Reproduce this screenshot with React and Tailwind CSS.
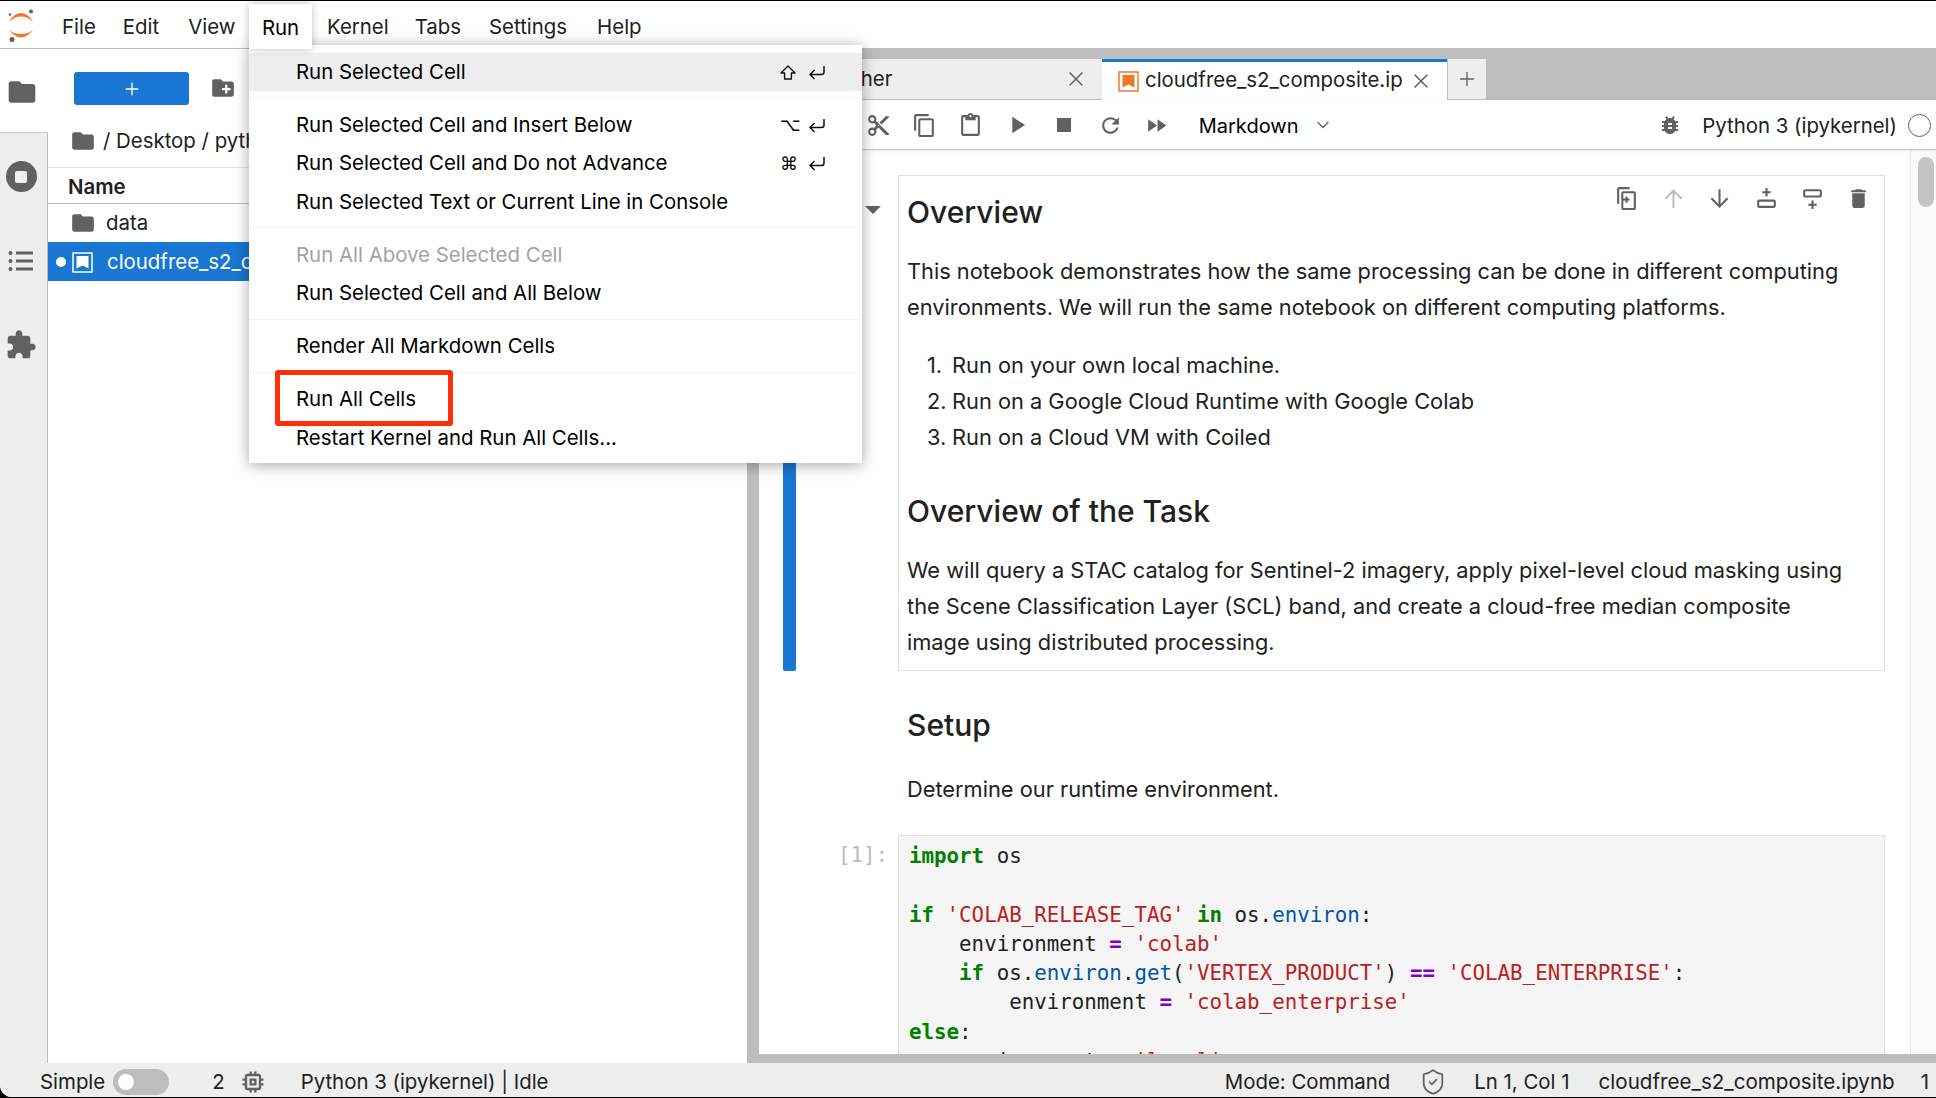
import React from "react";
import { ChevronDown, ShieldCheck, X, Plus } from "lucide-react";

const FONT = "font-['Inter','Liberation_Sans',sans-serif]";
const MONO = "font-['DejaVu_Sans_Mono','Liberation_Mono',monospace]";

// material style glyphs used by JupyterLab
const PATHS = {
  folder: "M10 4H4c-1.1 0-2 .9-2 2v12c0 1.1.9 2 2 2h16c1.1 0 2-.9 2-2V8c0-1.1-.9-2-2-2h-8l-2-2z",
  newFolder: "M20 6h-8l-2-2H4c-1.11 0-1.99.89-1.99 2L2 18c0 1.11.89 2 2 2h16c1.11 0 2-.89 2-2V8c0-1.11-.89-2-2-2zm-1 8h-3v3h-2v-3h-3v-2h3V9h2v3h3v2z",
  puzzle: "M20.5 11H19V7c0-1.1-.9-2-2-2h-4V3.5C13 2.12 11.88 1 10.5 1S8 2.12 8 3.5V5H4c-1.1 0-1.99.9-1.99 2v3.8H3.5c1.49 0 2.7 1.21 2.7 2.7s-1.21 2.7-2.7 2.7H2V20c0 1.1.9 2 2 2h3.8v-1.5c0-1.49 1.21-2.7 2.7-2.7 1.49 0 2.7 1.21 2.7 2.7V22H17c1.1 0 2-.9 2-2v-4h1.5c1.38 0 2.5-1.12 2.5-2.5S21.88 11 20.5 11z",
  cut: "M9.64 7.64c.23-.5.36-1.05.36-1.64 0-2.21-1.79-4-4-4S2 3.79 2 6s1.79 4 4 4c.59 0 1.14-.13 1.64-.36L10 12l-2.36 2.36C7.14 14.13 6.59 14 6 14c-2.21 0-4 1.79-4 4s1.79 4 4 4 4-1.79 4-4c0-.59-.13-1.14-.36-1.64L12 14l7 7h3v-1L9.64 7.64zM6 8c-1.1 0-2-.89-2-2s.9-2 2-2 2 .89 2 2-.9 2-2 2zm0 12c-1.1 0-2-.89-2-2s.9-2 2-2 2 .89 2 2-.9 2-2 2zm6-7.5c-.28 0-.5-.22-.5-.5s.22-.5.5-.5.5.22.5.5-.22.5-.5.5zM19 3l-6 6 2 2 7-7V3h-3z",
  copy: "M16 1H4c-1.1 0-2 .9-2 2v14h2V3h12V1zm3 4H8c-1.1 0-2 .9-2 2v14c0 1.1.9 2 2 2h11c1.1 0 2-.9 2-2V7c0-1.1-.9-2-2-2zm0 16H8V7h11v14z",
  paste: "M19 2h-4.18C14.4.84 13.3 0 12 0c-1.3 0-2.4.84-2.82 2H5c-1.1 0-2 .9-2 2v16c0 1.1.9 2 2 2h14c1.1 0 2-.9 2-2V4c0-1.1-.9-2-2-2zm-7 0c.55 0 1 .45 1 1s-.45 1-1 1-1-.45-1-1 .45-1 1-1zm7 18H5V4h2v3h10V4h2v16z",
  play: "M8 5v14l11-7z",
  stop: "M6 6h12v12H6z",
  restart: "M17.65 6.35C16.2 4.9 14.21 4 12 4c-4.42 0-7.99 3.58-7.99 8s3.57 8 7.99 8c3.73 0 6.84-2.55 7.73-6h-2.08c-.82 2.33-3.04 4-5.65 4-3.31 0-6-2.69-6-6s2.69-6 6-6c1.66 0 3.14.69 4.22 1.78L13 11h7V4l-2.35 2.35z",
  runAll: "M4 18l8.5-6L4 6v12zm9-12v12l8.5-6L13 6z",
  bug: "M20 8h-2.81c-.45-.78-1.07-1.45-1.82-1.96L17 4.41 15.59 3l-2.17 2.17C12.96 5.06 12.49 5 12 5c-.49 0-.96.06-1.41.17L8.41 3 7 4.41l1.62 1.63C7.88 6.55 7.26 7.22 6.81 8H4v2h2.09c-.05.33-.09.66-.09 1v1H4v2h2v1c0 .34.04.67.09 1H4v2h2.81c1.04 1.79 2.97 3 5.19 3s4.15-1.21 5.19-3H20v-2h-2.09c.05-.33.09-.66.09-1v-1h2v-2h-2v-1c0-.34-.04-.67-.09-1H20V8zm-6 8h-4v-2h4v2zm0-4h-4v-2h4v2z",
  duplicate: "M15 1H5C3.9 1 3 1.9 3 3v14h2V3h10V1zm4 4H9C7.9 5 7 5.9 7 7v14c0 1.1.9 2 2 2h10c1.1 0 2-.9 2-2V7c0-1.1-.9-2-2-2zm0 16H9V7h10v14zm-4-9h-2v-2h-2v2h-2v2h2v2h2v-2h2v-2z",
  up: "M12 3l-8.5 8.5 1.4 1.4L11 6.8V21h2V6.8l6.1 6.1 1.4-1.4z",
  down: "M12 21l8.5-8.5-1.4-1.4L13 17.2V3h-2v14.2l-6.1-6.1-1.4 1.4z",
  addAbove: "M11 2h2v3h3v2h-3v3h-2V7H8V5h3V2zM5 13h14c1.1 0 2 .9 2 2v4c0 1.1-.9 2-2 2H5c-1.1 0-2-.9-2-2v-4c0-1.1.9-2 2-2zm0 2v4h14v-4H5z",
  addBelow: "M5 3h14c1.1 0 2 .9 2 2v4c0 1.1-.9 2-2 2H5c-1.1 0-2-.9-2-2V5c0-1.1.9-2 2-2zm0 2v4h14V5H5zm6 9h2v3h3v2h-3v3h-2v-3H8v-2h3v-3z",
  trash: "M6 19c0 1.1.9 2 2 2h8c1.1 0 2-.9 2-2V7H6v12zM19 4h-3.5l-1-1h-5l-1 1H5v2h14V4z",
  chip: "M15 9H9v6h6V9zm-2 4h-2v-2h2v2zm8-2V9h-2V7c0-1.1-.9-2-2-2h-2V3h-2v2h-2V3H9v2H7c-1.1 0-2 .9-2 2v2H3v2h2v2H3v2h2v2c0 1.1.9 2 2 2h2v2h2v-2h2v2h2v-2h2c1.1 0 2-.9 2-2v-2h2v-2h-2v-2h2zm-4 6H7V7h10v10z",
};

function Glyph({ name, size = 24, className = "text-[#616161]" }) {
  return (
    <svg width={size} height={size} viewBox="0 0 24 24" fill="currentColor" className={className}>
      <path d={PATHS[name]} />
    </svg>
  );
}

function JupyterLogo() {
  return (
    <svg width="28" height="34" viewBox="0 0 28 34">
      <path d="M1 13C4 7 9 4 13 4s9 3 12 9C21 9 17 7.5 13 7.5S5 9 1 13z" fill="#f37726" />
      <path d="M1 21c3 4 8 7.5 12 7.5S22 25 25 21c-4 3-8 4-12 4s-8-1-12-4z" fill="#f37726" />
      <circle cx="23" cy="2.5" r="2" fill="#616161" />
      <circle cx="2" cy="5.5" r="1.3" fill="#616161" />
      <circle cx="4" cy="30.5" r="2.5" fill="#616161" />
    </svg>
  );
}

function NotebookIcon({ color, fill }) {
  return (
    <span className="block w-[21px] h-[21px] relative">
      <svg width="21" height="21" viewBox="0 0 21 21">
        <rect x="1" y="1" width="19" height="19" fill="none" stroke={color} strokeWidth="1.5" />
        <path d="M4.5 4h12v12.5l-6-3-6 3z" fill={fill} />
      </svg>
    </span>
  );
}

function Shortcut({ keyName }) {
  return (
    <span className="ml-auto flex items-center w-[46px] justify-between text-black">
      {keyName === "shift" ? (
        <svg width="16" height="15" viewBox="0 0 16 15" fill="none" stroke="#111" strokeWidth="1.4" strokeLinejoin="round">
          <path d="M8 1l7 7h-3.6v6H4.6V8H1z" />
        </svg>
      ) : (
        <span className="font-['DejaVu_Sans',sans-serif] text-[18px] leading-none">{keyName}</span>
      )}
      <svg width="18" height="15" viewBox="0 0 18 15" fill="none" stroke="#111" strokeWidth="1.5">
        <path d="M16 1v6a2.5 2.5 0 0 1-2.5 2.5H2M6.5 5L2 9.5 6.5 14" />
      </svg>
    </span>
  );
}

function MenuRow({ label, shortcut, active, disabled }) {
  return (
    <div className={`h-[38.5px] flex items-center pl-[47px] pr-[36px] pt-[1px] text-[20.4px] ${active ? "bg-[#eeeeee]" : ""} ${disabled ? "text-[#a3a3a3]" : "text-black"}`}>
      <span>{label}</span>
      {shortcut && <Shortcut keyName={shortcut} />}
    </div>
  );
}

function MenuSep() {
  return (
    <div className="h-[14.5px] pt-[6px]">
      <div className="h-px bg-[#f2f2f2]" />
    </div>
  );
}

function RunMenu() {
  return (
    <div className="absolute left-[249px] top-[45px] w-[613px] h-[418px] bg-white pt-[7.5px] shadow-[0_2px_14px_rgba(0,0,0,0.35)] z-20">
      <MenuRow label="Run Selected Cell" shortcut="shift" active />
      <MenuSep />
      <MenuRow label="Run Selected Cell and Insert Below" shortcut="⌥" />
      <MenuRow label="Run Selected Cell and Do not Advance" shortcut="⌘" />
      <MenuRow label="Run Selected Text or Current Line in Console" />
      <MenuSep />
      <MenuRow label="Run All Above Selected Cell" disabled />
      <MenuRow label="Run Selected Cell and All Below" />
      <MenuSep />
      <MenuRow label="Render All Markdown Cells" />
      <MenuSep />
      <MenuRow label="Run All Cells" />
      <MenuRow label="Restart Kernel and Run All Cells..." />
      <div className="absolute left-[26px] top-[325px] w-[178px] h-[56px] border-[5px] border-[#ff2d08] rounded-[3px]" />
    </div>
  );
}

function MenuBar() {
  return (
    <div className="h-[45px] flex items-stretch bg-white border-b border-[#bdbdbd] shrink-0 relative">
      <div className="w-[51px] pl-[8px] flex items-center">
        <JupyterLogo />
      </div>
      <div className="flex items-center pt-[3px] text-[20.4px] text-[#212121] w-[198px]">
        <span className="ml-[11px]">File</span>
        <span className="ml-[27px]">Edit</span>
        <span className="ml-[29px]">View</span>
      </div>
      <div className="w-[63px] h-[45px] pt-[3px] bg-white text-black text-[20.4px] flex items-center justify-center z-30 shadow-[0_0_8px_rgba(0,0,0,0.25)]">Run</div>
      <div className="flex items-center pt-[3px] text-[20.4px] text-[#212121]">
        <span className="ml-[15px]">Kernel</span>
        <span className="ml-[26px]">Tabs</span>
        <span className="ml-[28px]">Settings</span>
        <span className="ml-[30px]">Help</span>
      </div>
    </div>
  );
}

function IconStrip() {
  return (
    <div className="w-[48px] shrink-0 bg-[#eeeeee] border-r border-[#bdbdbd] flex flex-col">
      <div className="h-[84px] bg-white flex items-center justify-center pr-[5px] pt-[3px] -mr-px border-b border-[#d0d0d0]">
        <Glyph name="folder" size={32} />
      </div>
      <div className="h-[84px] flex items-center justify-center pr-[5px] pt-[3px]">
        <span className="w-[31px] h-[31px] rounded-full bg-[#616161] flex items-center justify-center">
          <span className="w-[12px] h-[12px] rounded-[2px] bg-[#eeeeee]" />
        </span>
      </div>
      <div className="h-[84px] flex items-center justify-center pr-[5px] pt-[3px]">
        <svg width="26" height="22" viewBox="0 0 26 22" fill="#616161">
          <circle cx="2.5" cy="3" r="2" />
          <circle cx="2.5" cy="11" r="2" />
          <circle cx="2.5" cy="19" r="2" />
          <rect x="8" y="1.5" width="17" height="3" />
          <rect x="8" y="9.5" width="17" height="3" />
          <rect x="8" y="17.5" width="17" height="3" />
        </svg>
      </div>
      <div className="h-[84px] flex items-center justify-center pr-[5px] pt-[3px]">
        <Glyph name="puzzle" size={32} />
      </div>
    </div>
  );
}

function FileBrowser() {
  return (
    <div className="w-[699px] shrink-0 bg-white text-[20.4px] text-[#212121] overflow-hidden">
      <div className="h-[69px] pl-[26px] pt-[23px] flex items-start">
        <button className="w-[115px] h-[33px] bg-[#1976d2] rounded-[3px] flex items-center justify-center">
          <Plus size={20} color="#fff" strokeWidth={1.6} />
        </button>
        <span className="ml-[21px] mt-[3px]"><Glyph name="newFolder" size={26} /></span>
      </div>
      <div className="h-[50px] pl-[22px] pb-[3px] flex items-center border-b border-[#e0e0e0]">
        <Glyph name="folder" size={26} />
        <span className="ml-[7px] whitespace-nowrap">/ Desktop / python-data / notebooks</span>
      </div>
      <div className="h-[36px] pl-[20px] pt-[4px] flex items-center font-semibold border-b border-[#bdbdbd]">Name</div>
      <div className="h-[38px] pl-[22px] flex items-center">
        <Glyph name="folder" size={26} />
        <span className="ml-[10px]">data</span>
      </div>
      <div className="h-[39px] pt-[1px] flex items-center bg-[#1976d2] text-white relative pl-[24px]">
        <span className="absolute left-[8px] w-[10px] h-[10px] rounded-full bg-white" />
        <NotebookIcon color="#fff" fill="#fff" />
        <span className="ml-[14px] whitespace-nowrap">cloudfree_s2_composite.ipynb</span>
      </div>
    </div>
  );
}

function TabBar() {
  return (
    <div className="h-[51px] bg-[#bdbdbd] flex items-end shrink-0 text-[20.4px]">
      <div className="w-[343px] h-[41px] bg-[#eeeeee] border-b border-[#bdbdbd] flex items-center pl-[43px] pr-[14px] text-[#212121]">
        <span className="flex-1">Launcher</span>
        <X size={24} color="#616161" strokeWidth={1.5} />
      </div>
      <div className="w-[345px] h-[41px] bg-white border-t-[3px] border-[#1976d2] flex items-center text-[#212121]">
        <span className="ml-[16px]"><NotebookIcon color="#f37726" fill="#f37726" /></span>
        <span className="ml-[6px] w-[257px] pb-[1px] overflow-hidden whitespace-nowrap">cloudfree_s2_composite.ipynb</span>
        <X size={24} color="#616161" strokeWidth={1.5} className="ml-[7px]" />
      </div>
      <div className="w-[39px] h-[41px] bg-[#eeeeee] border-l border-b border-[#bdbdbd] flex items-center justify-center">
        <Plus size={22} color="#616161" strokeWidth={1.5} />
      </div>
    </div>
  );
}

function NotebookToolbar() {
  const tools = ["cut", "copy", "paste", "play", "stop", "restart", "runAll"];
  return (
    <div className="h-[50px] shrink-0 bg-white border-b border-[#c4c4c4] shadow-[0_1px_3px_rgba(0,0,0,0.08)] flex items-center pl-[96px] pr-[5px] pt-[1px] text-[20.4px] text-[#212121] z-10">
      {tools.map((t) => (
        <span key={t} className="w-[46.4px] flex justify-center">
          <Glyph name={t} size={t === "stop" || t === "play" ? 28 : 25} />
        </span>
      ))}
      <span className="ml-[19px] pt-[2px] text-[20px] text-black">Markdown</span>
      <ChevronDown size={20} color="#616161" strokeWidth={1.6} className="ml-[15px]" />
      <span className="ml-auto"><Glyph name="bug" size={24} /></span>
      <span className="ml-[20px] pt-[2px]">Python 3 (ipykernel)</span>
      <span className="ml-[11px] w-[23px] h-[23px] rounded-full border-[1.5px] border-[#616161]" />
    </div>
  );
}

function CellTools() {
  const tools = [
    ["duplicate", "text-[#616161]"],
    ["up", "text-[#bdbdbd]"],
    ["down", "text-[#616161]"],
    ["addAbove", "text-[#616161]"],
    ["addBelow", "text-[#616161]"],
    ["trash", "text-[#616161]"],
  ];
  return (
    <div className="absolute right-[2px] top-[10px] flex">
      {tools.map(([t, c]) => (
        <span key={t} className="w-[46.4px] flex justify-center">
          <Glyph name={t} size={25} className={c} />
        </span>
      ))}
    </div>
  );
}

function MarkdownCell() {
  return (
    <div className="flex">
      <div className="w-[24px] shrink-0" />
      <div className="w-[13px] shrink-0 bg-[#1976d2] rounded-[2px]" />
      <div className="w-[102px] shrink-0 relative">
        <span className="absolute left-[69px] top-[31px] w-0 h-0 border-x-[8px] border-x-transparent border-t-[8px] border-t-[#616161]" />
      </div>
      <div className="relative w-[987px] h-[496px] border border-[#e0e0e0] pl-[8px] pt-[16px]">
        <CellTools />
        <h1 className="text-[30px] leading-[40px] font-medium">Overview</h1>
        <p className="mt-[21px] text-[21.8px] leading-[36px]">
          This notebook demonstrates how the same processing can be done in different computing<br />
          environments. We will run the same notebook on different computing platforms.
        </p>
        <ol className="mt-[22px] text-[21.8px] leading-[36px] pl-[20px]">
          <li><span className="inline-block w-[25px]">1.</span>Run on your own local machine.</li>
          <li><span className="inline-block w-[25px]">2.</span>Run on a Google Cloud Runtime with Google Colab</li>
          <li><span className="inline-block w-[25px]">3.</span>Run on a Cloud VM with Coiled</li>
        </ol>
        <h2 className="mt-[36px] text-[30px] leading-[40px] font-medium">Overview of the Task</h2>
        <p className="mt-[21px] text-[21.8px] leading-[36px]">
          We will query a STAC catalog for Sentinel-2 imagery, apply pixel-level cloud masking using<br />
          the Scene Classification Layer (SCL) band, and create a cloud-free median composite<br />
          image using distributed processing.
        </p>
      </div>
    </div>
  );
}

const K = ({ children }) => <span className="font-bold text-[#008000]">{children}</span>;
const S = ({ children }) => <span className="text-[#ba2121]">{children}</span>;
const O = ({ children }) => <span className="font-bold text-[#7f00c8]">{children}</span>;
const A = ({ children }) => <span className="text-[#0055aa]">{children}</span>;

function CodeCell() {
  return (
    <div className="flex mt-[28px]">
      <div className={`w-[139px] shrink-0 pt-[6px] pr-[10px] text-right text-[20.8px] leading-[29.3px] text-[#bdbdbd] ${MONO}`}>[1]:</div>
      <div className="w-[987px] shrink-0 bg-[#f5f5f5] border border-[#e0e0e0] pl-[10px] pt-[6px] pb-[20px]">
        <pre className={`${MONO} text-[20.8px] leading-[29.3px] text-[#212121]`}>
          <K>import</K> os{"\n\n"}
          <K>if</K> <S>'COLAB_RELEASE_TAG'</S> <K>in</K> os.<A>environ</A>:{"\n"}
          {"    "}environment <O>=</O> <S>'colab'</S>{"\n"}
          {"    "}<K>if</K> os.<A>environ</A>.<A>get</A>(<S>'VERTEX_PRODUCT'</S>) <O>==</O> <S>'COLAB_ENTERPRISE'</S>:{"\n"}
          {"        "}environment <O>=</O> <S>'colab_enterprise'</S>{"\n"}
          <K>else</K>:{"\n"}
          {"    "}environment <O>=</O> <S>'local'</S>
        </pre>
      </div>
    </div>
  );
}

function NotebookBody() {
  return (
    <div className="flex-1 min-h-0 flex bg-white overflow-hidden">
      <div className="flex-1 min-w-0 pt-[25px] text-[#212121] overflow-hidden">
        <MarkdownCell />
        <div className="ml-[139px] pl-[9px] mt-[34px]">
          <h2 className="text-[30px] leading-[40px] font-medium">Setup</h2>
          <p className="mt-[26px] text-[21.8px] leading-[36px]">Determine our runtime environment.</p>
        </div>
        <CodeCell />
      </div>
      <div className="w-[26px] shrink-0 border-l border-[#e6e6e6] bg-[#fafafa] pl-[7px] pt-[7px]">
        <div className="w-[16px] h-[50px] rounded-[8px] bg-[#c4c4c4]" />
      </div>
    </div>
  );
}

function StatusBar() {
  return (
    <div className="h-[34px] shrink-0 bg-[#eeeeee] pt-[4px] flex items-center text-[20.4px] text-[#212121]">
      <span className="ml-[40px]">Simple</span>
      <span className="ml-[8px] w-[56px] h-[26px] rounded-full bg-[#bdbdbd] flex items-center pl-[5px]">
        <span className="w-[16px] h-[16px] rounded-full bg-white" />
      </span>
      <span className="ml-[43px]">2</span>
      <span className="ml-[14px]"><Glyph name="chip" size={28} /></span>
      <span className="ml-[34px]">Python 3 (ipykernel) | Idle</span>
      <span className="ml-auto">Mode: Command</span>
      <ShieldCheck size={28} color="#616161" strokeWidth={1.5} className="ml-[29px]" />
      <span className="ml-[27px]">Ln 1, Col 1</span>
      <span className="ml-[29px] text-[20.6px]">cloudfree_s2_composite.ipynb</span>
      <span className="ml-[26px] mr-[7px]">1</span>
    </div>
  );
}

export default function App() {
  return (
    <div className={`relative w-[1936px] h-[1098px] bg-black overflow-hidden py-[1px] ${FONT}`}>
      <div className="h-full flex flex-col bg-white rounded-bl-[12px] overflow-hidden">
        <div className="h-[3px] bg-white shrink-0" />
        <MenuBar />
        <div className="flex-1 min-h-0 flex">
          <IconStrip />
          <FileBrowser />
          <div className="flex-1 min-w-0 flex flex-col bg-[#bdbdbd] pl-[12px] pb-[9px]">
            <TabBar />
            <NotebookToolbar />
            <NotebookBody />
          </div>
        </div>
        <StatusBar />
      </div>
      <RunMenu />
    </div>
  );
}
